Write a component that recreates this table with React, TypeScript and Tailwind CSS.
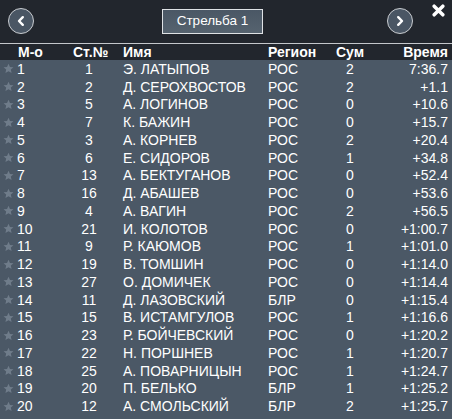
import React from "react";

const rows: [string, string, string, string, string, string][] = [
  ["1", "1", "Э. ЛАТЫПОВ", "РОС", "2", "7:36.7"],
  ["2", "2", "Д. СЕРОХВОСТОВ", "РОС", "2", "+1.1"],
  ["3", "5", "А. ЛОГИНОВ", "РОС", "0", "+10.6"],
  ["4", "7", "К. БАЖИН", "РОС", "0", "+15.7"],
  ["5", "3", "А. КОРНЕВ", "РОС", "2", "+20.4"],
  ["6", "6", "Е. СИДОРОВ", "РОС", "1", "+34.8"],
  ["7", "13", "А. БЕКТУГАНОВ", "РОС", "0", "+52.4"],
  ["8", "16", "Д. АБАШЕВ", "РОС", "0", "+53.6"],
  ["9", "4", "А. ВАГИН", "РОС", "2", "+56.5"],
  ["10", "21", "И. КОЛОТОВ", "РОС", "0", "+1:00.7"],
  ["11", "9", "Р. КАЮМОВ", "РОС", "1", "+1:01.0"],
  ["12", "19", "В. ТОМШИН", "РОС", "0", "+1:14.0"],
  ["13", "27", "О. ДОМИЧЕК", "РОС", "0", "+1:14.4"],
  ["14", "11", "Д. ЛАЗОВСКИЙ", "БЛР", "0", "+1:15.4"],
  ["15", "15", "В. ИСТАМГУЛОВ", "РОС", "1", "+1:16.6"],
  ["16", "23", "Р. БОЙЧЕВСКИЙ", "РОС", "0", "+1:20.2"],
  ["17", "22", "Н. ПОРШНЕВ", "РОС", "1", "+1:20.7"],
  ["18", "25", "А. ПОВАРНИЦЫН", "РОС", "1", "+1:24.7"],
  ["19", "20", "П. БЕЛЬКО", "БЛР", "1", "+1:25.2"],
  ["20", "12", "А. СМОЛЬСКИЙ", "БЛР", "2", "+1:25.7"],
];

function Star() {
  return (
    <svg width="11" height="11" viewBox="0 0 24 24" className="shrink-0">
      <path
        d="M12 1.5l3.2 7 7.6.8-5.7 5.1 1.6 7.5L12 18l-6.7 3.9 1.6-7.5L1.2 9.3l7.6-.8z"
        fill="#6f7c8a"
      />
    </svg>
  );
}

function Circle({ dir }: { dir: "l" | "r" }) {
  return (
    <div className="w-[26px] h-[26px] rounded-full border-[1.5px] border-[#c9ccd0] bg-[#4a5664] flex items-center justify-center">
      <svg width="12" height="12" viewBox="0 0 12 12">
        <path
          d={dir === "l" ? "M7.8 2.2L4 6l3.8 3.8" : "M4.2 2.2L8 6 4.2 9.8"}
          stroke="white"
          strokeWidth="2.4"
          fill="none"
          strokeLinecap="round"
          strokeLinejoin="round"
        />
      </svg>
    </div>
  );
}

export default function App() {
  return (
    <div
      className="w-[452px] h-[419px] bg-[#4b5866] text-white overflow-hidden"
      style={{ fontFamily: '"Liberation Sans", Arial, sans-serif' }}
    >
      <div className="bg-[#22262d]">
        <div className="h-[43px] relative flex items-start">
          <div className="absolute left-[8px] top-[8px]">
            <Circle dir="l" />
          </div>
          <div className="absolute left-[162px] top-[9px] w-[101px] h-[25px] border border-[#dfe2e5] bg-gradient-to-b from-[#4a5765] to-[#56636f] flex items-center justify-center text-[13.5px]">
            Стрельба 1
          </div>
          <div className="absolute left-[387px] top-[8px]">
            <Circle dir="r" />
          </div>
          <div className="absolute left-[432px] top-[4px]">
            <svg width="13" height="13" viewBox="0 0 12 12">
              <path d="M2 2L10 10M10 2L2 10" stroke="white" strokeWidth="3.2" strokeLinecap="round" />
            </svg>
          </div>
        </div>
        <div className="h-px bg-[#c4c7cb]" />
        <div className="h-[16px] flex items-center text-[14px] font-bold leading-none">
          <div className="w-[70px] pl-[18px]">М-о</div>
          <div className="w-[53px] pl-[3px]">Ст.№</div>
          <div className="w-[145px]">Имя</div>
          <div className="w-[68px]">Регион</div>
          <div className="w-[40px]">Сум</div>
          <div className="flex-1 text-right pr-[4px]">Время</div>
        </div>
      </div>
      <div className="flex flex-col">
        {rows.map((r) => (
          <div key={r[0]} className="h-[17.75px] flex items-center text-[14px] leading-none">
            <div className="w-[70px] flex items-center pl-[3px] gap-[3px]">
              <Star />
              <span>{r[0]}</span>
            </div>
            <div className="w-[38px] text-center">{r[1]}</div>
            <div className="w-[15px]" />
            <div className="w-[145px] whitespace-nowrap">{r[2]}</div>
            <div className="w-[68px]">{r[3]}</div>
            <div className="w-[28px] text-center">{r[4]}</div>
            <div className="flex-1 text-right pr-[4px]">{r[5]}</div>
          </div>
        ))}
      </div>
    </div>
  );
}
